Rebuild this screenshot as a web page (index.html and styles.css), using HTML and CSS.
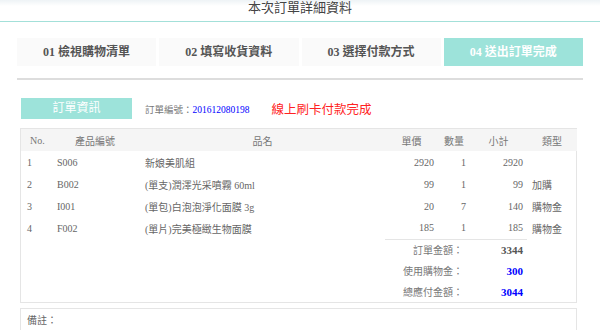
FILE: index.html
```html
<!DOCTYPE html>
<html lang="zh-Hant">
<head>
  <meta charset="UTF-8" />
  <title>本次訂單詳細資料</title>
  <link rel="stylesheet" href="styles.css">
</head>
<body>

  <header class="top">
    <h1>本次訂單詳細資料</h1>
  </header>

  <div class="steps">
    <div class="step">01 檢視購物清單</div>
    <div class="step">02 填寫收貨資料</div>
    <div class="step">03 選擇付款方式</div>
    <div class="step active">04 送出訂單完成</div>
  </div>

  <div class="order">
    <div class="order-head">
      <div class="tag">訂單資訊</div>
      <span class="order-no">訂單編號：<b>201612080198</b></span>
      <span class="paid">線上刷卡付款完成</span>
    </div>

    <div class="box">
      <table>
        <colgroup>
          <col style="width:29px"><col style="width:90px"><col style="width:245px"><col style="width:53px">
          <col style="width:32px"><col style="width:57px"><col style="width:50px">
        </colgroup>
        <thead>
          <tr>
            <th class="no">No.</th>
            <th>產品編號</th>
            <th>品名</th>
            <th>單價</th>
            <th>數量</th>
            <th>小計</th>
            <th>類型</th>
          </tr>
        </thead>
        <tbody>
          <tr>
            <td class="no">1</td><td class="code">S006</td><td class="name">新娘美肌組</td>
            <td class="r">2920</td><td class="r">1</td><td class="r">2920</td><td class="type"></td>
          </tr>
          <tr>
            <td class="no">2</td><td class="code">B002</td><td class="name">(單支)潤澤光采噴霧 60ml</td>
            <td class="r">99</td><td class="r">1</td><td class="r">99</td><td class="type">加購</td>
          </tr>
          <tr>
            <td class="no">3</td><td class="code">I001</td><td class="name">(單包)白泡泡淨化面膜 3g</td>
            <td class="r">20</td><td class="r">7</td><td class="r">140</td><td class="type">購物金</td>
          </tr>
          <tr>
            <td class="no">4</td><td class="code">F002</td><td class="name">(單片)完美極緻生物面膜</td>
            <td class="r">185</td><td class="r">1</td><td class="r">185</td><td class="type">購物金</td>
          </tr>
          <tr class="sum first">
            <td colspan="3"></td><td colspan="2" class="label">訂單金額：</td><td class="val">3344</td><td></td>
          </tr>
          <tr class="sum">
            <td colspan="3"></td><td colspan="2" class="label">使用購物金：</td><td class="val blue">300</td><td></td>
          </tr>
          <tr class="sum">
            <td colspan="3"></td><td colspan="2" class="label">總應付金額：</td><td class="val blue">3044</td><td></td>
          </tr>
        </tbody>
      </table>
    </div>

    <div class="box note">備註：</div>
  </div>

</body>
</html>
```

FILE: styles.css
```css
* {
  box-sizing: border-box;
}

body {
  margin: 0;
  font-family: "Liberation Serif", "Noto Sans CJK TC", serif;
  color: #666;
  background: #fff;
}

.top {
  height: 22px;
  border-bottom: 1px solid #a3e0d9;
  background: linear-gradient(#eef3f6, #fff 6px);
  text-align: center;
}

.top h1 {
  margin: 0;
  font-size: 13px;
  font-weight: normal;
  line-height: 16px;
  color: #444;
}

.steps {
  display: flex;
  gap: 3px;
  margin: 16px 17px 0;
  padding-bottom: 12px;
  border-bottom: 2px solid #ddd;
}

.step {
  flex: 1;
  height: 28px;
  line-height: 28px;
  text-align: center;
  background: #fafafa;
  font-size: 12px;
  font-weight: bold;
  color: #555;
}

.step.active {
  background: #9de3da;
  color: #fff;
}

.order {
  margin: 18px 23px 0 20px;
}

.order-head {
  display: flex;
  align-items: center;
  height: 21px;
  padding-left: 1px;
}

.tag {
  width: 111px;
  height: 21px;
  line-height: 21px;
  background: #9de3da;
  color: #fff;
  font-size: 12px;
  text-align: center;
}

.order-no {
  margin-left: 13px;
  font-size: 9.5px;
  color: #777;
}

.order-no b {
  font-weight: normal;
  color: #00f;
}

.paid {
  margin-left: 22px;
  font-size: 12.5px;
  color: #f22;
}

.box {
  margin-top: 9px;
  border: 1px solid #e5e5e5;
}

table {
  width: 100%;
  border-collapse: collapse;
  table-layout: fixed;
  font-size: 10px;
}

th {
  height: 22px;
  padding: 0;
  background: #f5f5f5;
  font-weight: normal;
  color: #777;
  text-align: center;
}

th.no {
  text-align: left;
  padding-left: 9px;
}

td {
  height: 22px;
  padding: 0;
  white-space: nowrap;
}

td.no {
  padding-left: 6px;
}

td.code {
  padding-left: 7px;
}

td.name {
  padding-left: 5px;
}

td.r {
  text-align: right;
  padding-right: 4px;
}

td.type {
  padding-left: 5px;
}

.sum td {
  height: 21px;
}

.sum.first .label,
.sum.first .val {
  border-top: 1px solid #e5e5e5;
}

.sum .label {
  text-align: right;
  padding-right: 7px;
  color: #777;
}

.sum .val {
  text-align: right;
  padding-right: 4px;
  font-size: 11px;
  font-weight: bold;
  color: #555;
}

.sum .val.blue {
  color: #00f;
}

.note {
  margin-top: 5px;
  height: 40px;
  padding: 6px 6px;
  font-size: 10px;
  line-height: 12px;
}
```
